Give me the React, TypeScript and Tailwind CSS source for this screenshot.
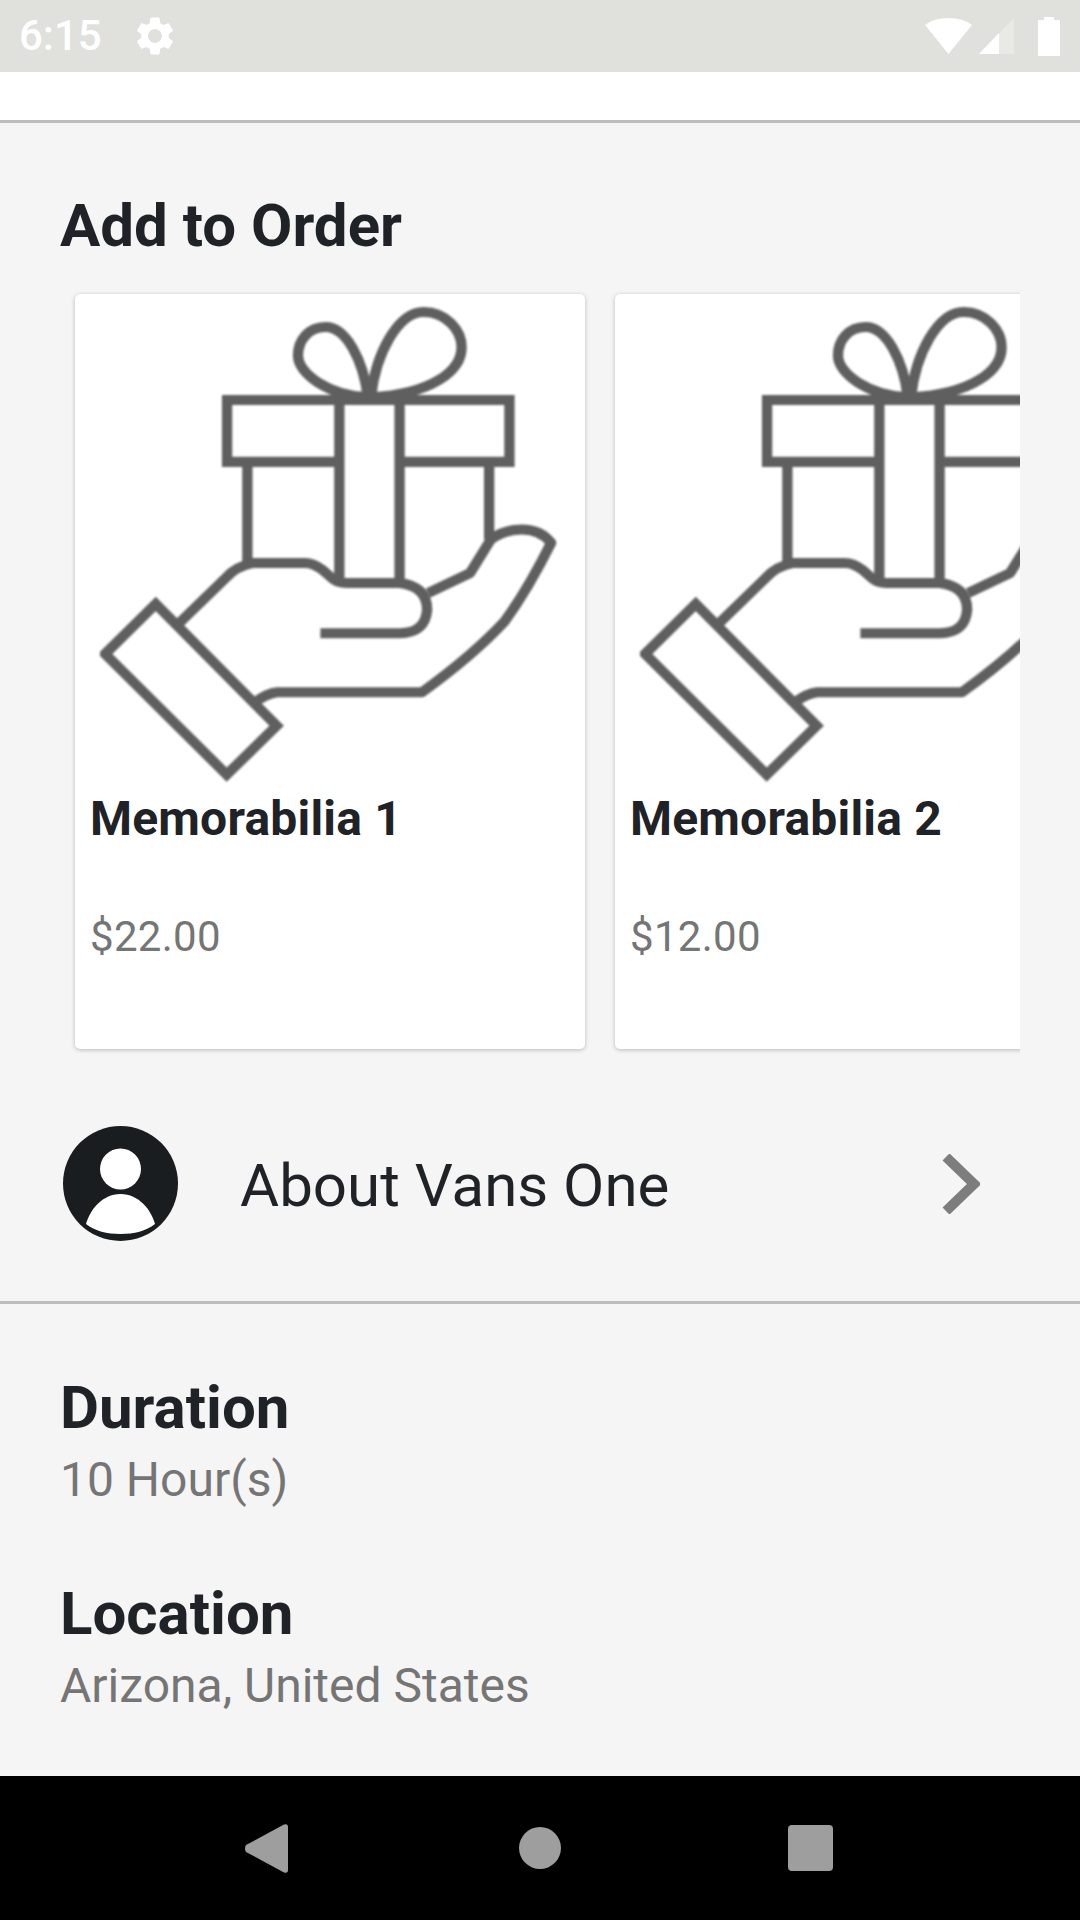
import React from 'react';
import { MdSettings } from 'react-icons/md';

const cards = [
  { name: 'Memorabilia 1', price: '$22.00' },
  { name: 'Memorabilia 2', price: '$12.00' },
];

function GiftIcon() {
  return (
    <svg
      viewBox="115 80 1330 1420"
      preserveAspectRatio="none"
      className="w-[458px] h-[475px] shrink-0 blur-[0.8px]"
      fill="none"
      stroke="#5f5f5f"
      strokeWidth="30"
      strokeLinejoin="round"
    >
      {/* bow */}
      <path d="M893 350C880 240 830 140 770 140C720 140 690 180 690 225C690 280 780 345 893 350" />
      <path d="M902 350C915 220 980 95 1055 95C1120 95 1165 150 1165 200C1165 270 1080 340 902 350" />
      {/* box */}
      <path d="M810 543H484V358H1304V543H985" strokeLinejoin="miter" />
      <path d="M810 358V905M985 358V905M543 543V850M1245 543V775" />
      {/* hand */}
      <path d="M340 1030L480 890Q510 855 560 845H710Q735 845 760 865L790 892Q805 905 830 905H985Q1065 915 1065 985Q1060 1055 985 1055H755" />
      <path d="M565 1262Q600 1235 630 1232H1050Q1200 1120 1290 1020Q1360 920 1425 785Q1395 745 1340 745Q1290 745 1250 775L1190 875L1068 935" />
      {/* cuff */}
      <path d="M277 968L628 1332L483 1478L130 1117Z" strokeLinejoin="miter" />
    </svg>
  );
}

function StatusBar() {
  return (
    <div className="h-[72px] shrink-0 bg-[#e0e1dc] flex items-center pl-[19px] pr-[20px] text-white">
      <span className="text-[42px] leading-none font-medium font-['Roboto',sans-serif]">6:15</span>
      <MdSettings className="w-[46px] h-[46px] ml-[30px]" />
      <div className="ml-auto flex items-center">
        <svg viewBox="0 0 47 36" className="w-[47px] h-[36px]" fill="white">
          <path d="M23.5 36L0 7Q9 0 23.5 0T47 7Z" />
        </svg>
        <svg viewBox="0 0 35 36" className="w-[35px] h-[36px] ml-[7px]" fill="white">
          <path d="M35 0V36H0Z" fillOpacity="0.3" />
          <path d="M20 15V36H0Z" />
        </svg>
        <svg viewBox="0 0 22 39" className="w-[22px] h-[39px] ml-[24px]" fill="white">
          <path d="M6 0H16V3H22V39H0V3H6Z" />
        </svg>
      </div>
    </div>
  );
}

function NavBar() {
  return (
    <div className="h-[144px] shrink-0 bg-black flex items-center pl-[245px]">
      <svg viewBox="0 0 43 49" className="w-[43px] h-[49px]" fill="#9e9e9e">
        <path d="M1 21L39 0.6Q43 -0.5 43 3V46Q43 49.5 39 48.4L1 28Q-1 24.5 1 21Z" />
      </svg>
      <div className="w-[42px] h-[42px] rounded-full bg-[#9e9e9e] ml-[231px]" />
      <div className="w-[45px] h-[46px] rounded-[4px] bg-[#9e9e9e] ml-[227px]" />
    </div>
  );
}

export default function App() {
  return (
    <div className="w-[1080px] h-[1920px] flex flex-col bg-[#f5f5f5] overflow-hidden font-['Roboto',sans-serif]">
      <StatusBar />
      <div className="h-[51px] shrink-0 bg-white border-b-[3px] border-[#bdbdbd]" />

      <div className="flex-1 min-h-0">
        <h2 className="mt-[71px] ml-[60px] text-[60px] leading-[64px] font-bold text-[#1f2226]">Add to Order</h2>

        <div className="mt-[29px] mx-[60px] pt-[7px] pb-[8px] overflow-hidden">
          <div className="flex gap-[30px] pl-[15px]">
            {cards.map((card) => (
              <div key={card.name} className="w-[510px] h-[755px] shrink-0 bg-white rounded-[5px] shadow-[0_1px_4px_rgba(0,0,0,0.25)]">
                <div className="pl-[25px] pt-[13px]">
                  <GiftIcon />
                </div>
                <p className="mt-[7px] pl-[15px] text-[48px] leading-[60px] font-bold text-[#1f2226] tracking-[0.2px]">{card.name}</p>
                <p className="mt-[58px] pl-[15px] text-[42px] leading-[60px] text-[#757575] tracking-[0.3px]">{card.price}</p>
              </div>
            ))}
          </div>
        </div>

        <div className="mt-[69px] h-[175px] pl-[63px] pr-[100px] flex items-start border-b-[3px] border-[#bdbdbd] box-content pb-0">
          <svg viewBox="0 0 115 115" className="w-[115px] h-[115px] shrink-0">
            <circle cx="57.5" cy="57.5" r="57.5" fill="#1a1d20" />
            <circle cx="57.5" cy="43" r="20.5" fill="white" />
            <path d="M57.5 68C39 68 27 84 23 98C32 105 44 108 57.5 108C71 108 83 105 92 98C88 84 76 68 57.5 68Z" fill="white" />
          </svg>
          <span className="ml-[62px] mt-[28px] text-[60px] leading-[64px] text-[#1f2226]">About Vans One</span>
          <svg viewBox="0 0 38 60" className="ml-auto mt-[28px] w-[38px] h-[60px] shrink-0" fill="none" stroke="#7d7d7d" strokeWidth="10">
            <path d="M4 3L32 30L4 57" />
          </svg>
        </div>

        <div className="pl-[60px]">
          <h2 className="mt-[72px] text-[60px] leading-[64px] font-bold text-[#1f2226]">Duration</h2>
          <p className="mt-[12px] text-[48px] leading-[56px] text-[#757575]">10 Hour(s)</p>
          <h2 className="mt-[74px] text-[60px] leading-[64px] font-bold text-[#1f2226]">Location</h2>
          <p className="mt-[12px] text-[48px] leading-[56px] text-[#757575]">Arizona, United States</p>
        </div>
      </div>

      <NavBar />
    </div>
  );
}
